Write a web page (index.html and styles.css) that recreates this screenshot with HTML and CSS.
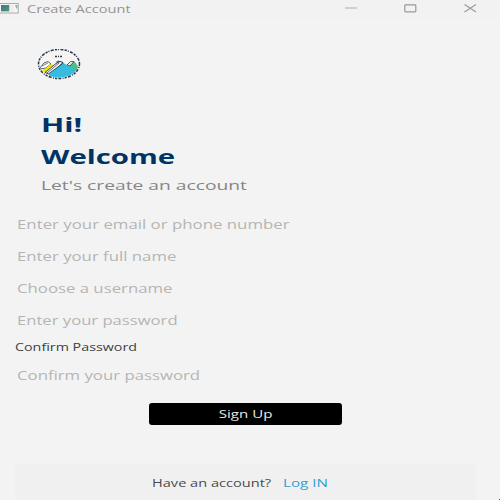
FILE: index.html
```html
<!DOCTYPE html>
<html lang="en">
<head>
<meta charset="utf-8">
<title>Create Account</title>
<link rel="stylesheet" href="styles.css">
</head>
<body>
<div class="window">
  <header class="titlebar">
    <svg class="app-icon" width="19" height="12" viewBox="0 0 19 12">
      <defs><linearGradient id="pane" x1="0" y1="0" x2="1" y2="1"><stop offset="0" stop-color="#3c7399"/><stop offset="1" stop-color="#4f9b72"/></linearGradient></defs>
      <rect x="-1" y="1.5" width="19.2" height="9.5" fill="#f6f6f6" stroke="#aaa"/>
      <rect x="1" y="3" width="8.3" height="6.4" fill="url(#pane)"/>
      <rect x="10.5" y="3" width="3" height="7" fill="#ececec"/>
      <path d="M15 3h2.400v3.600h-1z" fill="#78b8ad"/>
    </svg>
    <span class="caption">Create Account</span>
    <svg class="controls" width="136" height="16" viewBox="0 0 136 16" fill="none" stroke="#999">
      <path d="M1 8h12" stroke="#bbb" stroke-width="1.3"/>
      <rect x="60.8" y="4.8" width="11" height="7" rx=".8" stroke-width="1.2"/>
      <path d="M120.5 4.5l11.5 7.5M132 4.5L120.500 12" stroke-width="1.1"/>
    </svg>
  </header>
  <main>
    <svg class="logo" width="46" height="34" viewBox="0 0 46 34">
      <defs><clipPath id="seal"><ellipse cx="22" cy="15" rx="19.500" ry="13.500"/></clipPath></defs>
      <ellipse cx="22" cy="15" rx="20" ry="14" fill="#f8f4f1"/>
      <g clip-path="url(#seal)">
        <path d="M3 19l4-5 4-1.500 3 2.500-5 4-6 1z" fill="#fff" stroke="#23384c" stroke-width=".8"/>
        <path d="M5 17l6-3" stroke="#23384c" stroke-width=".6"/>
        <path d="M5 21l3.500-1.500 5.500-4.500 2.500 1L8 24z" fill="#f4e500"/>
        <path d="M31 18l4-5h3l4 6v3h-8z" fill="#49be8b"/>
        <path d="M30 16l3.500-3.500H37L33 17z" fill="#eee" stroke="#23384c" stroke-width=".8"/>
        <path d="M18.500 13l3-1.500 4 1.500-2 2z" fill="#267b91"/>
        <path d="M8 23.500l11-9 4-2 3 1-13 12z" fill="#f7f3f1" stroke="#23384c" stroke-width=".9"/>
        <path d="M10 24l12-10" stroke="#23384c" stroke-width=".7"/>
        <path d="M12 24.500L26.500 14 41 22.500l-7 8H12z" fill="#36bcde"/>
        <path d="M12 24.500L26.500 14" stroke="#23384c" stroke-width=".8"/>
      </g>
      <ellipse cx="22" cy="15" rx="20.500" ry="14.500" fill="none" stroke="#263b50" stroke-width="1.500" stroke-dasharray="2.200 1 1 1.400 3 1.200"/>
      <path d="M18 7.500h2M21 7.500h1M23 7.500h2" stroke="#263b50" stroke-width="1.700"/>
    </svg>
    <h1><span class="hi">Hi!</span><span class="welcome">Welcome</span></h1>
    <p class="intro"><span>Let's create an account</span></p>
    <form>
      <div class="field"><span class="email">Enter your email or phone number</span></div>
      <div class="field"><span>Enter your full name</span></div>
      <div class="field"><span>Choose a username</span></div>
      <div class="field"><span class="password">Enter your password</span></div>
      <div class="label"><span>Confirm Password</span></div>
      <div class="field"><span>Confirm your password</span></div>
      <button type="button"><span>Sign Up</span></button>
    </form>
  </main>
  <footer><span class="question">Have an account?</span><a class="login">Log IN</a></footer>
  <i class="grip"></i>
</div>
</body>
</html>
```
FILE: styles.css
```css
* { box-sizing: border-box; }
body { margin: 0; background: #f3f3f3; font-family: "Open Sans", "Noto Sans", sans-serif; }
.window { position: relative; width: 500px; height: 500px; overflow: hidden; display: flex; flex-direction: column; }
span, a { display: inline-block; white-space: nowrap; transform-origin: 0 50%; }
.titlebar { height: 19px; display: flex; align-items: flex-start; background: #f2f2f2; }
.app-icon { margin-top: 2px; }
.caption { margin-left: 8px; font-size: 11px; line-height: 17px; color: #949494; transform: scaleX(1.325); }
.controls { margin-left: auto; margin-right: 20px; }
main { flex: 1; }
.logo { display: block; margin: 30px 0 0 37px; }
h1 { margin: 26px 0 0 41px; font-size: 19px; line-height: 32px; color: #003366; }
h1 span { display: block; width: max-content; }
.hi { transform: scaleX(1.6); }
.welcome { transform: scaleX(1.545); }
.intro { margin: 0 0 0 41px; height: 24px; font-size: 13px; line-height: 24px; color: #868686; }
.intro span { transform: translateY(-.4px) scaleX(1.48); }
form { margin-top: 11px; padding-left: 15px; }
.field { height: 32px; padding-left: 2px; font-size: 12.5px; line-height: 33px; color: #b5b5b5; }
.field span { transform: translateY(-.5px) scaleX(1.34); }
.field .email { transform: translateY(-.5px) scaleX(1.345); }
.field .password { transform: translateY(-.5px) scaleX(1.33); }
.label { height: 23px; font-size: 11px; line-height: 21px; color: #404040; }
.label span { transform: scaleX(1.3); }
button { display: flex; align-items: center; justify-content: center; width: 193px; height: 22px; margin: 12px 0 0 134px; padding: 0 0 2px; border: 0; border-radius: 3px; background: #000; color: #e8e8e8; font: 11px "Open Sans", sans-serif; }
button span { transform: scaleX(1.37); transform-origin: 50% 50%; }
footer { height: 36px; margin: 0 24px 0 15px; padding-left: 137px; background: #f0f0f0; font-size: 11px; line-height: 37px; display: flex; }
.question { width: 131px; color: #4b4b4b; transform: scaleX(1.325); }
.login { color: #309dce; transform: scaleX(1.38); }
.grip { position: absolute; right: 0; bottom: 0; width: 1px; height: 1px; background: #555; }
```
